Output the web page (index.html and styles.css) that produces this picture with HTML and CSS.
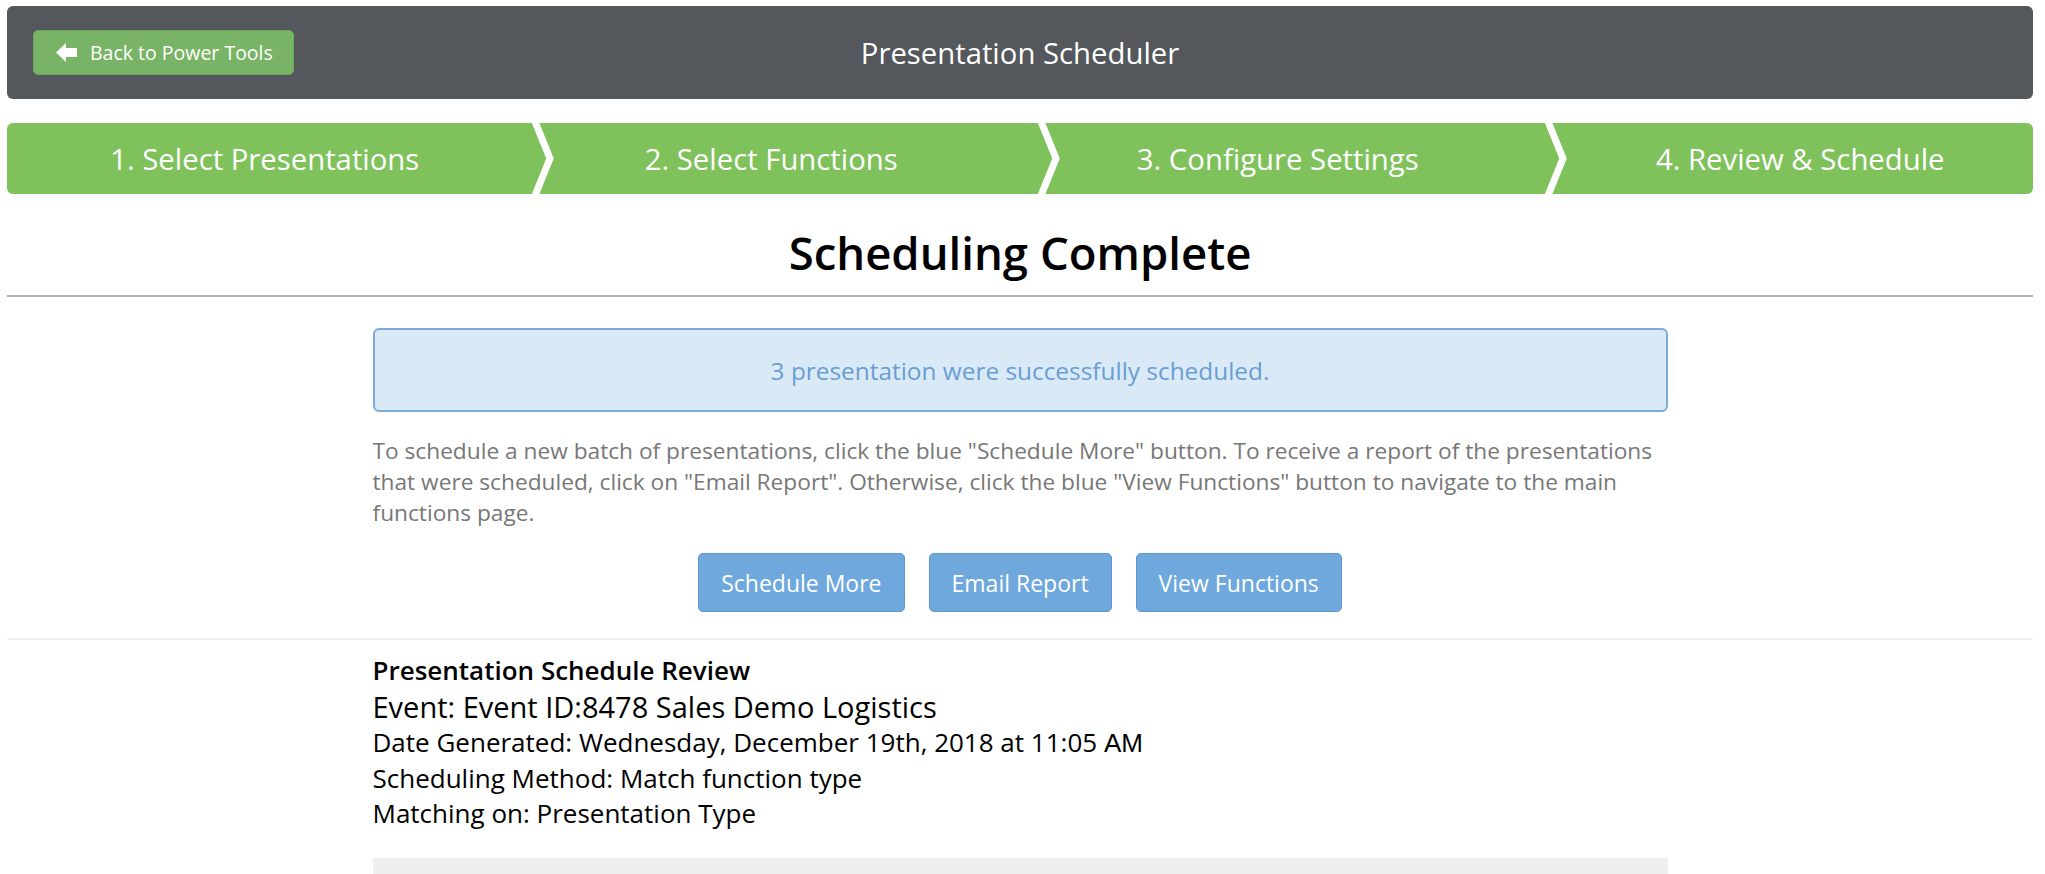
FILE: index.html
```html
<!DOCTYPE html>
<html lang="en">
<head>
<meta charset="utf-8">
<title>Presentation Scheduler</title>
<link rel="stylesheet" href="styles.css">
</head>
<body>
<div class="page">
  <header class="topbar">
    <div class="topbar-left">
      <button class="back-btn" type="button">
        <svg class="back-icon" viewBox="0 0 22 19" width="22" height="19" aria-hidden="true">
          <polygon points="0,9.5 10,0 10,5 21,5 21,14 10,14 10,19" fill="#ffffff"/>
        </svg>
        <span>Back to Power Tools</span>
      </button>
    </div>
    <h1 class="topbar-title">Presentation Scheduler</h1>
    <div class="topbar-right"></div>
  </header>

  <nav class="steps">
    <div class="step">1. Select Presentations
      <svg class="chevron" viewBox="0 0 50 71" width="50" height="71" aria-hidden="true"><polyline points="20,-4 36,35.5 20,75" fill="none" stroke="#ffffff" stroke-width="7"/></svg>
    </div>
    <div class="step">2. Select Functions
      <svg class="chevron" viewBox="0 0 50 71" width="50" height="71" aria-hidden="true"><polyline points="20,-4 36,35.5 20,75" fill="none" stroke="#ffffff" stroke-width="7"/></svg>
    </div>
    <div class="step">3. Configure Settings
      <svg class="chevron" viewBox="0 0 50 71" width="50" height="71" aria-hidden="true"><polyline points="20,-4 36,35.5 20,75" fill="none" stroke="#ffffff" stroke-width="7"/></svg>
    </div>
    <div class="step step-last">4. Review &amp; Schedule</div>
  </nav>

  <h2 class="page-title">Scheduling Complete</h2>
  <div class="rule"></div>

  <section class="content">
    <div class="alert">3 presentation were successfully scheduled.</div>
    <p class="help">To schedule a new batch of presentations, click the blue "Schedule More" button. To receive a report of the presentations that were scheduled, click on "Email Report". Otherwise, click the blue "View Functions" button to navigate to the main functions page.</p>
    <div class="actions">
      <button class="btn" type="button">Schedule More</button>
      <button class="btn" type="button">Email Report</button>
      <button class="btn" type="button">View Functions</button>
    </div>
  </section>

  <div class="divider"></div>

  <section class="content review">
    <div class="review-title">Presentation Schedule Review</div>
    <div class="review-event">Event: Event ID:8478 Sales Demo Logistics</div>
    <div class="review-line">Date Generated: Wednesday, December 19th, 2018 at 11:05 <span class="ampm">AM</span></div>
    <div class="review-line">Scheduling Method: Match function type</div>
    <div class="review-line">Matching on: Presentation Type</div>
    <div class="table-stub"></div>
  </section>
</div>
</body>
</html>
```

FILE: styles.css
```css
* { box-sizing: border-box; }

html, body {
  margin: 0;
  padding: 0;
  background: #ffffff;
}

body {
  font-family: "Open Sans", "Noto Sans", "Liberation Sans", sans-serif;
  color: #000000;
}

.page {
  padding: 6px 12px 0 7px;
  overflow: hidden;
  height: 874px;
}

/* ---------- top bar ---------- */
.topbar {
  height: 93px;
  background: #54575c;
  border-radius: 6px;
  display: grid;
  grid-template-columns: 1fr auto 1fr;
  align-items: center;
}

.topbar-left {
  padding-left: 26px;
}

.back-btn {
  display: flex;
  align-items: center;
  height: 45px;
  width: 261px;
  padding: 0 0 0 22px;
  background: #79b466;
  border: 1px solid #6fa85c;
  border-radius: 5px;
  color: #ffffff;
  font-family: inherit;
  font-size: 19.5px;
  cursor: pointer;
}

.back-icon {
  margin-right: 12px;
  flex: none;
}

.topbar-title {
  margin: 0;
  color: #ffffff;
  font-size: 29.3px;
  font-weight: 400;
  white-space: nowrap;
}

/* ---------- steps ---------- */
.steps {
  margin-top: 24px;
  height: 71px;
  background: #7fc25c;
  border-radius: 6px;
  display: grid;
  grid-template-columns: repeat(4, minmax(0, 1fr));
  overflow: hidden;
}

.step {
  position: relative;
  display: flex;
  align-items: center;
  justify-content: center;
  padding-left: 9px;
  color: #ffffff;
  font-size: 29.3px;
  white-space: nowrap;
}

.step-last {
  padding-left: 41px;
}

.chevron {
  position: absolute;
  top: 0;
  right: -50px;
  z-index: 1;
}

/* ---------- heading ---------- */
.page-title {
  margin: 28px 0 12px;
  text-align: center;
  font-size: 45.5px;
  line-height: 61px;
  font-weight: 600;
}

.rule {
  height: 2px;
  background: #b3b3b3;
}

/* ---------- content ---------- */
.content {
  width: 1295px;
  margin: 0 auto;
}

.alert {
  margin-top: 31px;
  height: 84px;
  display: flex;
  align-items: center;
  justify-content: center;
  background: #d9eaf6;
  border: 2px solid #7eaadb;
  border-radius: 6px;
  color: #6a9dd3;
  font-size: 24.4px;
}

.help {
  margin: 23px 0 0;
  color: #777777;
  font-size: 22.7px;
  line-height: 31px;
}

.actions {
  margin-top: 25px;
  display: flex;
  justify-content: center;
  gap: 24px;
}

.btn {
  height: 59px;
  padding: 0 22px;
  background: #6fa8dc;
  border: 1px solid #5e97d0;
  border-radius: 5px;
  color: #ffffff;
  font-family: inherit;
  font-size: 23px;
  cursor: pointer;
}

.divider {
  margin-top: 26px;
  height: 2px;
  background: #f0f0f0;
}

/* ---------- review ---------- */
.review {
  padding-top: 12px;
}

.review-title {
  font-size: 26px;
  line-height: 36px;
  font-weight: 600;
}

.review-event {
  font-size: 29px;
  line-height: 37px;
}

.review-line {
  font-size: 26px;
  line-height: 35px;
}

.ampm {
  font-family: "Liberation Sans", Arial, sans-serif;
}

.table-stub {
  margin-top: 27px;
  height: 40px;
  background: #efefef;
}
```
